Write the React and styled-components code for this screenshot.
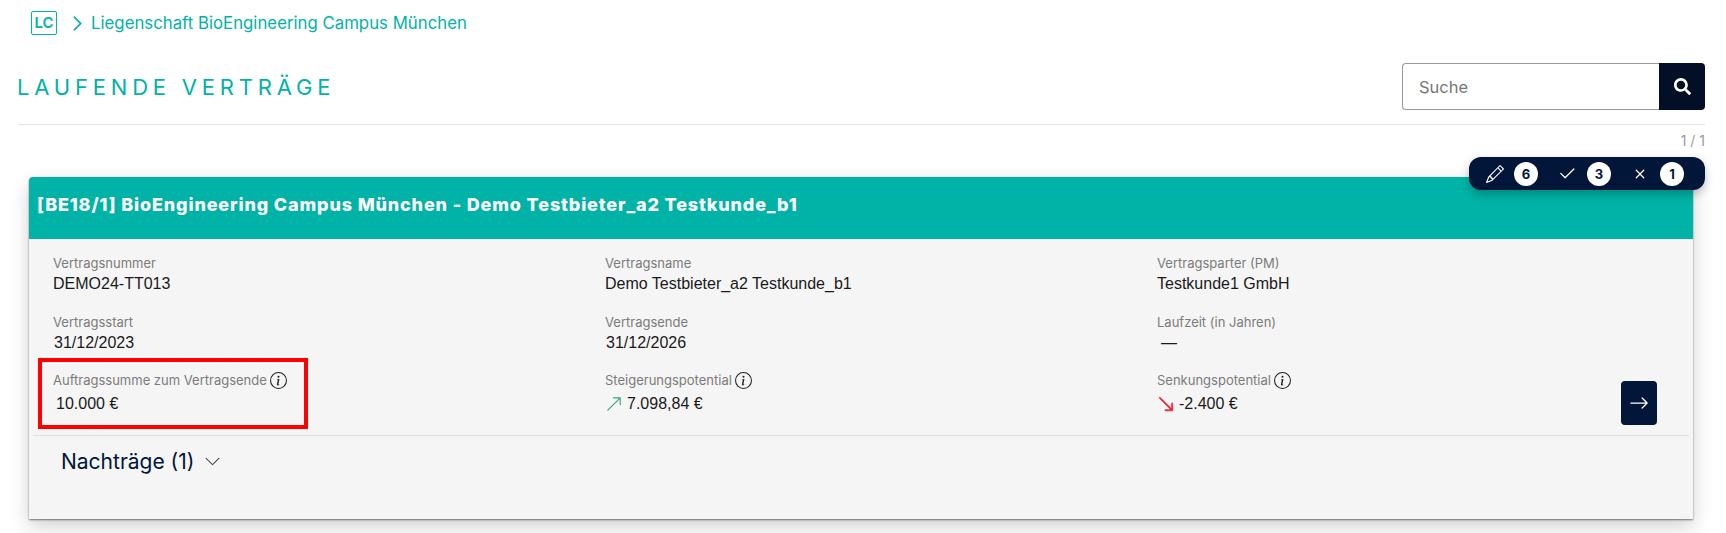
import React from "react";
import styled, { createGlobalStyle } from "styled-components";
import { FaSearch } from "react-icons/fa";
import {
  BsArrowDownRight,
  BsArrowRight,
  BsArrowUpRight,
  BsCheck2,
  BsChevronDown,
  BsChevronRight,
  BsInfoCircle,
  BsPencil,
  BsX,
} from "react-icons/bs";

const teal = "#00b3a6";
const navy = "#011638";

const GlobalStyle = createGlobalStyle`
  html, body {
    margin: 0;
    background: #fff;
    font-family: Inter, "Noto Sans", sans-serif;
    overflow: hidden;
  }
`;

const fields = [
  { label: "Vertragsnummer", value: "DEMO24-TT013" },
  { label: "Vertragsname", value: "Demo Testbieter_a2 Testkunde_b1" },
  { label: "Vertragsparter (PM)", value: "Testkunde1 GmbH" },
  { label: "Vertragsstart", value: "31/12/2023", indent: 1 },
  { label: "Vertragsende", value: "31/12/2026", indent: 1 },
  { label: "Laufzeit (in Jahren)", value: "—", indent: 4 },
  { label: "Auftragssumme zum Vertragsende", value: "10.000 €", info: true, indent: 3 },
  { label: "Steigerungspotential", value: "7.098,84 €", info: true, trend: "up" },
  { label: "Senkungspotential", value: "-2.400 €", info: true, trend: "down" },
];

export default function App() {
  return (
    <Page>
      <GlobalStyle />
      <Breadcrumb>
        <LogoBox>LC</LogoBox>
        <BsChevronRight size={17} stroke="currentColor" strokeWidth={0.7} />
        <span>Liegenschaft BioEngineering Campus München</span>
      </Breadcrumb>

      <TitleRow>
        <Title>LAUFENDE VERTRÄGE</Title>
        <SearchGroup>
          <SearchInput placeholder="Suche" />
          <SearchButton>
            <FaSearch size={17} />
          </SearchButton>
        </SearchGroup>
      </TitleRow>

      <PageCount>1 / 1</PageCount>

      <CardArea>
        <StatusPill>
          <StatusItem>
            <BsPencil size={18} />
            <Count>6</Count>
          </StatusItem>
          <StatusItem>
            <BsCheck2 size={20} />
            <Count>3</Count>
          </StatusItem>
          <StatusItem>
            <BsX size={20} />
            <Count>1</Count>
          </StatusItem>
        </StatusPill>

        <Card>
          <CardHeader>
            [BE18/1] BioEngineering Campus München - Demo Testbieter_a2 Testkunde_b1
          </CardHeader>
          <CardBody>
            <FieldGrid>
              {fields.map((field) => (
                <Field key={field.label} $info={field.info}>
                  <Label>
                    {field.label}
                    {field.info && <BsInfoCircle size={17} color="#222" />}
                  </Label>
                  <Value $indent={field.indent}>
                    {field.trend === "up" && <BsArrowUpRight size={18} color="#2fa87a" />}
                    {field.trend === "down" && (
                      <BsArrowDownRight size={18} color="#ee1c2e" stroke="currentColor" strokeWidth={0.6} />
                    )}
                    {field.value}
                  </Value>
                </Field>
              ))}
            </FieldGrid>
            <Highlight />
            <NextButton>
              <BsArrowRight size={20} />
            </NextButton>
          </CardBody>
          <Divider />
          <Addenda>
            Nachträge (1)
            <BsChevronDown size={17} color="#444" />
          </Addenda>
        </Card>
      </CardArea>
    </Page>
  );
}

const Page = styled.div`
  height: 533px;
  padding: 0 21px 0 18px;
  box-sizing: border-box;
`;

const Breadcrumb = styled.div`
  display: flex;
  align-items: center;
  gap: 7px;
  height: 24px;
  padding: 11px 0 0 13px;
  color: ${teal};
  font-size: 16.8px;
  span {
    margin-left: -2px;
  }
`;

const LogoBox = styled.div`
  box-sizing: border-box;
  width: 26px;
  height: 24px;
  margin-right: 5px;
  border: 1px solid ${teal};
  border-radius: 2px;
  font-size: 15px;
  font-weight: 600;
  line-height: 22px;
  text-align: center;
`;

const TitleRow = styled.div`
  display: flex;
  align-items: center;
  justify-content: space-between;
  height: 47px;
  margin-top: 28px;
  padding-bottom: 14px;
  border-bottom: 1px solid #e2e2e2;
`;

const Title = styled.h1`
  margin: 0 0 0 -1px;
  color: ${teal};
  font-size: 22px;
  font-weight: 400;
  letter-spacing: 4.8px;
`;

const SearchGroup = styled.div`
  display: flex;
  height: 47px;
`;

const SearchInput = styled.input`
  box-sizing: border-box;
  width: 257px;
  padding: 0 16px;
  border: 1px solid #9a9a9a;
  border-right: 0;
  border-radius: 4px 0 0 4px;
  font-family: inherit;
  font-size: 16.5px;
  outline: none;
  &::placeholder {
    color: #777;
  }
`;

const SearchButton = styled.button`
  display: flex;
  align-items: center;
  justify-content: center;
  width: 46px;
  padding: 0;
  border: 0;
  border-radius: 0 4px 4px 0;
  background: #020f26;
  color: #fff;
`;

const PageCount = styled.div`
  height: 31px;
  padding-top: 7px;
  box-sizing: border-box;
  color: #9a9a9a;
  font-size: 14px;
  text-align: right;
`;

const CardArea = styled.div`
  position: relative;
  padding: 21px 12px 0 11px;
`;

const StatusPill = styled.div`
  position: absolute;
  top: 1px;
  right: 0;
  z-index: 2;
  display: flex;
  align-items: center;
  gap: 19px;
  box-sizing: border-box;
  width: 236px;
  height: 33px;
  padding: 0 20px 0 17px;
  border-radius: 12px;
  background: ${navy};
  color: #fff;
  box-shadow: 0 4px 10px rgba(0, 0, 0, 0.25);
`;

const StatusItem = styled.div`
  display: flex;
  align-items: center;
  gap: 10px;
`;

const Count = styled.span`
  width: 24px;
  height: 24px;
  border-radius: 50%;
  background: #fff;
  color: ${navy};
  font-size: 13px;
  font-weight: 700;
  line-height: 24px;
  text-align: center;
`;

const Card = styled.section`
  height: 342px;
  border-radius: 4px 4px 0 0;
  background: #f5f5f5;
  box-shadow: 0 1px 2px rgba(0, 0, 0, 0.5), 0 8px 20px rgba(0, 0, 0, 0.18);
`;

const CardHeader = styled.header`
  display: flex;
  align-items: center;
  box-sizing: border-box;
  height: 62px;
  padding: 0 0 8px 8px;
  border-radius: 4px 4px 0 0;
  background: ${teal};
  color: #fff;
  font-size: 18px;
  font-weight: 800;
  letter-spacing: 0.85px;
`;

const CardBody = styled.div`
  position: relative;
  display: flex;
  box-sizing: border-box;
  height: 196px;
  padding: 15px 36px 10px 24px;
`;

const FieldGrid = styled.div`
  display: grid;
  flex: 1;
  grid-template-columns: 552px 552px 1fr;
  grid-auto-rows: 58.5px;
`;

const Field = styled.div`
  display: flex;
  flex-direction: column;
  gap: ${(props) => (props.$info ? 6 : 3)}px;
`;

const Label = styled.div`
  display: flex;
  align-items: center;
  gap: 3px;
  height: 18px;
  color: #7b7b7b;
  font-size: 13px;
`;

const Value = styled.div`
  display: flex;
  align-items: center;
  gap: 4px;
  padding-left: ${(props) => props.$indent || 0}px;
  color: #1a1a1a;
  font-family: "Liberation Sans", Arial, sans-serif;
  font-size: 16px;
`;

const Highlight = styled.div`
  position: absolute;
  top: 119px;
  left: 9px;
  box-sizing: border-box;
  width: 270px;
  height: 71px;
  border: 4px solid #f00;
`;

const NextButton = styled.button`
  display: flex;
  align-self: flex-end;
  flex-shrink: 0;
  align-items: center;
  justify-content: center;
  width: 36px;
  height: 44px;
  padding: 0;
  border: 0;
  border-radius: 4px;
  background: ${navy};
  color: #fff;
`;

const Divider = styled.hr`
  height: 1px;
  margin: 0 4px;
  border: 0;
  background: #e0e0e0;
`;

const Addenda = styled.div`
  display: flex;
  align-items: center;
  gap: 9px;
  padding: 13px 0 0 32px;
  color: ${navy};
  font-size: 21px;
`;
